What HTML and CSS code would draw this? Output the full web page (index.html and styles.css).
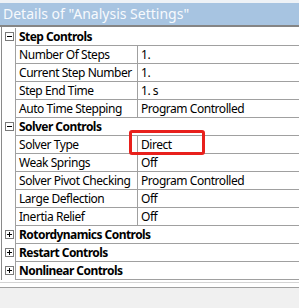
FILE: index.html
```html
<!DOCTYPE html>
<html lang="en">
<head>
    <meta charset="UTF-8">
    <meta name="viewport" content="width=device-width, initial-scale=1.0">
    <title>Details of "Analysis Settings"</title>
    <link rel="stylesheet" href="styles.css">
</head>
<body>
    <div class="panel">
        <div class="titlebar">Details of "Analysis Settings"</div>

        <div class="grid">
            <!-- Step Controls -->
            <div class="row group">
                <span class="gutter"><span class="toggle open"></span></span>
                <span class="label">Step Controls</span>
            </div>
            <div class="row">
                <span class="gutter"></span>
                <span class="label">Number Of Steps</span>
                <span class="value">1.</span>
            </div>
            <div class="row">
                <span class="gutter"></span>
                <span class="label">Current Step Number</span>
                <span class="value">1.</span>
            </div>
            <div class="row">
                <span class="gutter"></span>
                <span class="label">Step End Time</span>
                <span class="value">1. s</span>
            </div>
            <div class="row">
                <span class="gutter"></span>
                <span class="label">Auto Time Stepping</span>
                <span class="value">Program Controlled</span>
            </div>

            <!-- Solver Controls -->
            <div class="row group">
                <span class="gutter"><span class="toggle open"></span></span>
                <span class="label">Solver Controls</span>
            </div>
            <div class="row">
                <span class="gutter"></span>
                <span class="label">Solver Type</span>
                <span class="value">Direct</span>
            </div>
            <div class="row">
                <span class="gutter"></span>
                <span class="label">Weak Springs</span>
                <span class="value">Off</span>
            </div>
            <div class="row">
                <span class="gutter"></span>
                <span class="label">Solver Pivot Checking</span>
                <span class="value">Program Controlled</span>
            </div>
            <div class="row">
                <span class="gutter"></span>
                <span class="label">Large Deflection</span>
                <span class="value">Off</span>
            </div>
            <div class="row">
                <span class="gutter"></span>
                <span class="label">Inertia Relief</span>
                <span class="value">Off</span>
            </div>

            <!-- Collapsed groups -->
            <div class="row group">
                <span class="gutter"><span class="toggle closed"></span></span>
                <span class="label">Rotordynamics Controls</span>
            </div>
            <div class="row group">
                <span class="gutter"><span class="toggle closed"></span></span>
                <span class="label">Restart Controls</span>
            </div>
            <div class="row group">
                <span class="gutter"><span class="toggle closed"></span></span>
                <span class="label">Nonlinear Controls</span>
            </div>
        </div>

        <div class="grid-end"></div>
    </div>

    <div class="highlight"></div>
</body>
</html>
```

FILE: styles.css
```css
/* General styling */
body {
    font-family: "Noto Sans", "Liberation Sans", sans-serif;
    font-size: 12px;
    letter-spacing: -0.45px;
    color: #000;
    background-color: #f0f0f0;
    margin: 0;
    padding: 0;
}

.panel {
    background-color: #ffffff;
    padding-top: 3px;
    box-shadow: inset 0 3px 0 #eef2f6;
}

/* Title bar */
.titlebar {
    height: 22px;
    line-height: 21px;
    padding-left: 3px;
    background-color: #a7c4e1;
    color: #f7fafd;
    font-size: 14px;
    letter-spacing: 0;
    border-bottom: 2px solid #858585;
    white-space: nowrap;
}

/* Property grid */
.grid {
    margin-left: 1px;
    border-left: 1px solid #8a8a8a;
    padding-top: 1px;
}

.row {
    display: grid;
    grid-template-columns: 14px 122px 1fr;
    height: 18px;
}

.gutter {
    border-right: 1px solid #a0a0a0;
}

.label,
.value {
    border-bottom: 1px solid #a0a0a0;
    line-height: 17px;
    padding-left: 3px;
    white-space: nowrap;
    overflow: hidden;
}

.label {
    border-right: 1px solid #a0a0a0;
}

.row.group .label {
    grid-column: 2 / 4;
    border-right: none;
    font-weight: bold;
    letter-spacing: -0.55px;
}

/* Expand / collapse boxes */
.toggle {
    display: block;
    width: 9px;
    height: 9px;
    box-sizing: border-box;
    border: 1px solid #7a7a7a;
    margin: 4px 0 0 3px;
    position: relative;
    background-color: #fff;
}

.toggle::before {
    content: "";
    position: absolute;
    left: 1px;
    top: 3px;
    width: 5px;
    height: 1px;
    background-color: #000;
}

.toggle.closed::after {
    content: "";
    position: absolute;
    left: 3px;
    top: 1px;
    width: 1px;
    height: 5px;
    background-color: #000;
}

/* Bottom edge of the grid */
.grid-end {
    height: 2px;
    border-bottom: 1px solid #d4d4d4;
}

.panel::after {
    content: "";
    display: block;
    height: 4px;
    border-bottom: 1px solid #a0a0a0;
}

/* Red annotation box */
.highlight {
    position: absolute;
    left: 129px;
    top: 130px;
    width: 76px;
    height: 25px;
    box-sizing: border-box;
    border: 3px solid #e8201c;
    border-radius: 3px;
}
```
